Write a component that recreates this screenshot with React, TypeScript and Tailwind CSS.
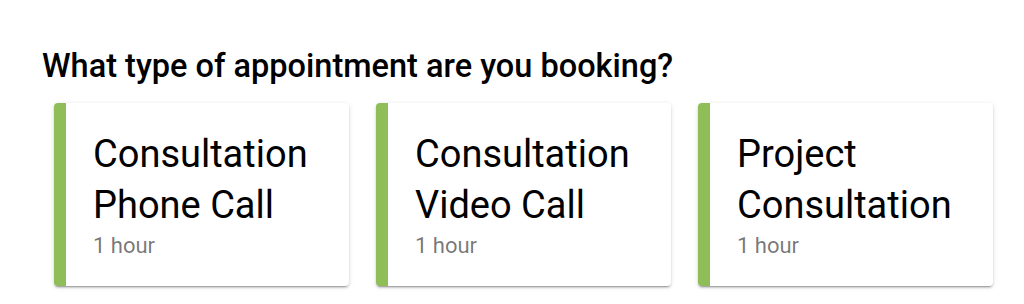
// App.tsx
// Selector de tipo de cita: tarjetas con borde verde
const TYPES = [
  { id: 'phone', title: ['Consultation', 'Phone Call'], duration: '1 hour' },
  { id: 'video', title: ['Consultation', 'Video Call'], duration: '1 hour' },
  { id: 'project', title: ['Project', 'Consultation'], duration: '1 hour' },
]

export default function App() {
  return (
    <div className="w-[1024px] h-[304px] bg-white pl-[42px] pt-[46px] font-['Roboto',sans-serif] overflow-hidden">
      <h2 className="text-[32.5px] leading-[40px] font-medium text-black">
        What type of appointment are you booking?
      </h2>

      {/* Tarjetas */}
      <div className="flex gap-[27px] pl-3 mt-[17px]">
        {TYPES.map(t => (
          <div
            key={t.id}
            className="shrink-0 w-[295px] h-[183px] bg-white rounded-[4px] border-l-[12px] border-[#8fbe58] pl-[27px] pt-[26px] shadow-[0_3px_1px_-2px_rgba(0,0,0,0.2),0_2px_2px_0_rgba(0,0,0,0.14),0_1px_5px_0_rgba(0,0,0,0.12)] cursor-pointer"
          >
            <div className="text-[38px] leading-[51px] text-black">
              {t.title.map(line => (
                <div key={line}>{line}</div>
              ))}
            </div>
            <div className="text-[22px] leading-[28px] mt-px text-[rgba(0,0,0,0.54)]">{t.duration}</div>
          </div>
        ))}
      </div>
    </div>
  )
}
